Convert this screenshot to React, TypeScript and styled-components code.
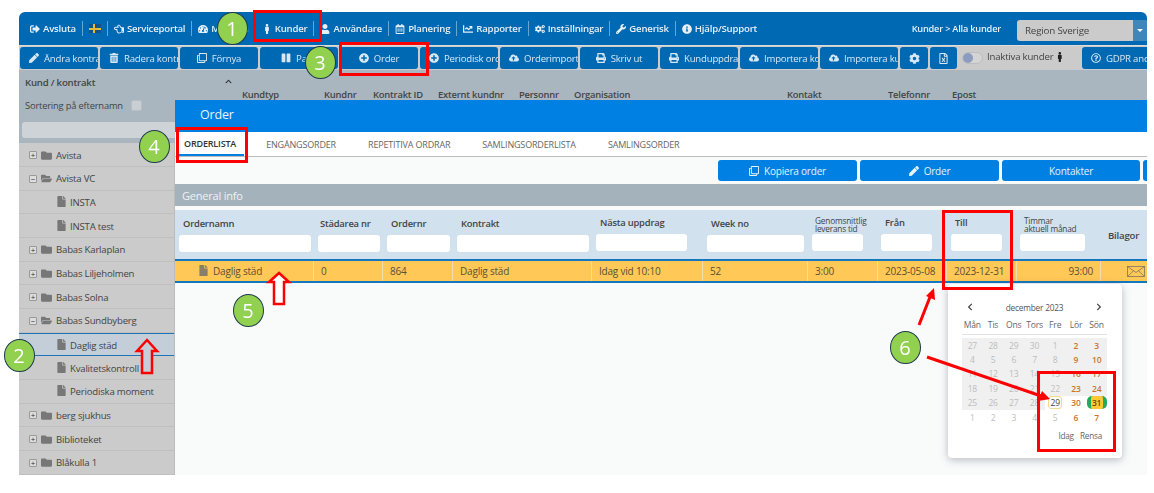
import React from 'react';
import styled, { createGlobalStyle } from 'styled-components';
import {
  FaChevronLeft,
  FaChevronRight,
  FaChevronUp,
  FaChartLine,
  FaCloudUploadAlt,
  FaCog,
  FaCogs,
  FaFile,
  FaFolder,
  FaFolderOpen,
  FaInfoCircle,
  FaMale,
  FaPause,
  FaPen,
  FaPlusCircle,
  FaPrint,
  FaRegCalendarAlt,
  FaRegClone,
  FaRegFileExcel,
  FaRegHandPointLeft,
  FaRegQuestionCircle,
  FaSignOutAlt,
  FaTachometerAlt,
  FaTrashAlt,
  FaUser,
  FaWrench,
} from 'react-icons/fa';

const GlobalStyle = createGlobalStyle`
  html, body {
    margin: 0;
    background: #fff;
    font-family: "Open Sans", "Noto Sans", sans-serif;
  }
  * {
    box-sizing: border-box;
  }
`;

const Page = styled.div`
  position: relative;
  width: 1154px;
  height: 493px;
  padding: 12px 7px 18px 19px;
  overflow: hidden;
`;

const Frame = styled.div`
  display: flex;
  flex-direction: column;
  width: 1128px;
  height: 463px;
  border-radius: 6px 6px 0 0;
  overflow: hidden;
  font-size: 10px;
  letter-spacing: -0.2px;
  filter: blur(0.3px);
`;

const NavBar = styled.div`
  display: flex;
  flex: none;
  align-items: center;
  height: 33px;
  padding-left: 5px;
  background: #0069b4;
  color: #e6f0f8;
`;

const NavItem = styled.div<{ $last?: boolean }>`
  display: flex;
  align-items: center;
  gap: 3px;
  height: 15px;
  padding: 0 6px;
  border-right: ${p => (p.$last ? 'none' : '1px solid #6aa6d2')};
  font-size: 9.6px;
  font-weight: 600;
  white-space: nowrap;
  svg {
    font-size: 10px;
  }
`;

const Flag = styled.span`
  display: block;
  width: 12px;
  height: 9px;
  background:
    linear-gradient(#e3b93a, #e3b93a) 0 50% / 100% 2px no-repeat,
    linear-gradient(#e3b93a, #e3b93a) 4px 0 / 2px 100% no-repeat,
    #14528c;
`;

const Breadcrumb = styled.div`
  margin-left: auto;
  font-size: 9.2px;
  font-weight: 600;
  white-space: nowrap;
`;

const RegionSelect = styled.div`
  display: flex;
  flex: none;
  align-items: center;
  width: 130px;
  height: 21px;
  margin: 3px 0 0 16px;
  border-radius: 3px 0 0 3px;
  background: #cbcbcb;
  color: #444;
  font-size: 9.8px;
  padding-left: 8px;
`;

const SelectCaret = styled.div`
  display: flex;
  align-items: center;
  justify-content: center;
  align-self: stretch;
  width: 14px;
  margin-left: auto;
  background: #3f86bb;
  &::before {
    content: '';
    border: 3px solid transparent;
    border-top-color: #fff;
    margin-top: 3px;
  }
`;

const ToolBar = styled.div`
  display: flex;
  flex: none;
  align-items: center;
  gap: 2px;
  height: 25px;
  padding-left: 1px;
  border-top: 1px solid #dcdcdc;
  background: #cbcbcb;
  overflow: hidden;
`;

const ToolButton = styled.div<{ $width?: number }>`
  display: flex;
  flex: none;
  align-items: center;
  justify-content: safe center;
  gap: 5px;
  width: ${p => p.$width ?? 78}px;
  height: 22px;
  padding: 0 9px;
  border-radius: 3px;
  background: #0069b4;
  color: #d8e8f4;
  font-size: 9.6px;
  white-space: nowrap;
  overflow: hidden;
  svg {
    flex: none;
    font-size: 10px;
  }
`;

const IconButton = styled(ToolButton)`
  padding: 0;
  svg {
    font-size: 11px;
  }
`;

const Toggle = styled.div`
  display: flex;
  flex: none;
  align-items: center;
  width: 21px;
  height: 12px;
  margin-left: 3px;
  border: 1px solid #bdbdbd;
  border-radius: 6px;
  background: #d4d4d4;
  &::before {
    content: '';
    width: 10px;
    height: 10px;
    border-radius: 50%;
    background: #8b9cc0;
  }
`;

const ToggleLabel = styled.div`
  display: flex;
  flex: none;
  align-items: center;
  gap: 2px;
  width: 78px;
  margin: -3px 15px 0 2px;
  color: #444;
  font-size: 9.6px;
  white-space: nowrap;
  svg {
    color: #222;
    font-size: 10px;
  }
`;

const Main = styled.div`
  display: flex;
  flex: 1;
  min-height: 0;
  background: #a9b6bf;
`;

const SideColumn = styled.div`
  display: flex;
  flex: none;
  flex-direction: column;
  width: 156px;
`;

const SideHead = styled.div`
  flex: none;
  height: 73.4px;
  padding: 6px 0 0 6px;
  color: #444;
`;

const SideTitle = styled.div`
  font-size: 9.6px;
  font-weight: 600;
  line-height: 14px;
`;

const SortRow = styled.div`
  display: flex;
  align-items: center;
  gap: 8px;
  height: 12px;
  margin-top: 9px;
  font-size: 9.4px;
`;

const SortCheck = styled.span`
  width: 11px;
  height: 11px;
  border: 1px solid #b7bfc5;
  border-radius: 2px;
  background: #c9cfd3;
`;

const SideSearch = styled.div`
  height: 16px;
  margin: 11px 0 0 -3px;
  border-radius: 3px 0 0 3px;
  background: #cdd3d7;
`;

const Tree = styled.div`
  flex: 1;
  border-right: 1px solid #bbb;
  background: #cbcbcb;
  overflow: hidden;
`;

const TreeRow = styled.div<{ $leaf?: boolean; $selected?: boolean }>`
  display: flex;
  align-items: center;
  height: 23.67px;
  padding: ${p => (p.$selected ? 3 : 1)}px 0 0 ${p => (p.$leaf ? 37 : 10)}px;
  border-bottom: 1px solid ${p => (p.$selected ? '#1f74b7' : '#bfbfbf')};
  border-top: ${p => (p.$selected ? '1px solid #1f74b7' : 'none')};
  background: ${p => (p.$selected ? '#c3ced8' : 'transparent')};
  color: #444;
  font-size: 9.6px;
  white-space: nowrap;
  svg {
    flex: none;
    color: #777;
  }
`;

const Expander = styled.span`
  display: flex;
  flex: none;
  align-items: center;
  justify-content: center;
  width: 8px;
  height: 8px;
  margin-right: 4px;
  border: 1px solid #999;
  border-radius: 1px;
  background: #ddd;
  color: #333;
  font-size: 8px;
  line-height: 1;
`;

const FolderIcon = styled.span`
  display: flex;
  margin-right: 4px;
  font-size: 11px;
`;

const FileIcon = styled.span`
  display: flex;
  margin: -2px 3px 0 0;
  font-size: 11px;
`;

const ListColumn = styled.div`
  display: flex;
  flex: 1;
  flex-direction: column;
  min-width: 0;
`;

const ListHead = styled.div`
  flex: none;
  height: 30px;
  padding-left: 67px;
  overflow: hidden;
  color: #444;
`;

const ChevronCell = styled.div`
  height: 17px;
  margin-left: -17px;
  padding-top: 8px;
  color: #333;
  font-size: 7px;
  line-height: 7px;
`;

const ListColumns = styled.div`
  display: grid;
  grid-template-columns: 82px 49px 65px 81px 55px 213px 101px 64px 60px;
  margin-top: 1px;
  font-size: 9.4px;
  font-weight: 600;
  line-height: 13px;
  white-space: nowrap;
`;

const Modal = styled.div`
  position: relative;
  display: flex;
  flex: 1;
  flex-direction: column;
  min-height: 0;
  background: #f9fbfb;
  overflow: hidden;
`;

const ModalTitle = styled.div`
  flex: none;
  height: 32px;
  padding: 7px 0 0 25px;
  background: #0080e2;
  color: #eaf4fc;
  font-size: 12.5px;
  line-height: 16px;
`;

const Tabs = styled.div`
  display: flex;
  flex: none;
  height: 25px;
  padding-left: 3px;
  border-bottom: 1px solid #bdbdbd;
  background: #fff;
`;

const Tab = styled.div<{ $active?: boolean }>`
  display: flex;
  align-items: center;
  height: 24px;
  margin-right: ${p => (p.$active ? 6 : 0)}px;
  padding: ${p => (p.$active ? '0 8px 0 6px' : '0 16px')};
  border-bottom: ${p => (p.$active ? '2px solid #0080e2' : 'none')};
  color: ${p => (p.$active ? '#333' : '#666')};
  font-size: 9px;
  font-weight: ${p => (p.$active ? 600 : 400)};
  letter-spacing: -0.17px;
  white-space: nowrap;
`;

const ActionRow = styled.div`
  display: flex;
  flex: none;
  gap: 3px;
  height: 27px;
  padding: 3px 0 0 543px;
`;

const ActionButton = styled.div<{ $width: number }>`
  display: flex;
  flex: none;
  align-items: center;
  justify-content: center;
  gap: 5px;
  width: ${p => p.$width}px;
  height: 21px;
  border-radius: 3px;
  background: #0080e2;
  color: #e6f2fc;
  font-size: 10px;
  svg {
    font-size: 10px;
  }
`;

const SectionBar = styled.div`
  flex: none;
  height: 22px;
  padding: 1px 0 0 7px;
  background: #a4b3bb;
  color: #eef2f4;
  font-size: 11px;
  line-height: 22px;
`;

const gridColumns = '139px 69px 70px 139px 111px 105px 70px 69px 70px 84px 46px';

const TableHead = styled.div`
  display: grid;
  flex: none;
  grid-template-columns: ${gridColumns};
  height: 49px;
  margin-top: 4px;
  background: #d2e1ee;
`;

const HeadCell = styled.div<{ $left?: number; $right?: number; $raised?: boolean }>`
  display: flex;
  flex-direction: column;
  height: 49px;
  padding: 0 ${p => p.$right ?? 3}px ${p => (p.$raised ? 8 : 7)}px ${p => p.$left ?? 4}px;
  color: #444;
`;

const HeadLabel = styled.div<{ $indent?: number }>`
  margin-top: auto;
  margin-bottom: 5px;
  padding-left: ${p => p.$indent ?? 4}px;
  font-size: 9.4px;
  font-weight: 600;
  line-height: 13px;
  white-space: nowrap;
`;

const SmallLabel = styled(HeadLabel)`
  margin-bottom: 1px;
  font-size: 8.3px;
  font-weight: 400;
  line-height: 8px;
`;

const FilterInput = styled.div`
  flex: none;
  height: 17px;
  border-radius: 3px;
  background: #fff;
`;

const BilagorCell = styled.div`
  align-self: center;
  padding-left: 7px;
  margin-top: 1px;
  color: #444;
  font-size: 9.6px;
  font-weight: 600;
`;

const TableRow = styled.div`
  display: grid;
  flex: none;
  grid-template-columns: ${gridColumns};
  height: 24px;
  border-top: 2px solid #1477bf;
  border-bottom: 2px solid #1477bf;
  background: #ffc857;
  color: #5b5135;
  font-size: 10px;
`;

const RowCell = styled.div<{ $end?: boolean }>`
  display: flex;
  align-items: center;
  justify-content: ${p => (p.$end ? 'flex-end' : 'flex-start')};
  padding: ${p => (p.$end ? '0 7px 0 0' : '0 0 0 7px')};
  border-right: 1px solid #f5dda8;
  white-space: nowrap;
`;

const NameCell = styled(RowCell)`
  padding-left: 23px;
  svg {
    margin: -2px 4px 0 0;
    color: #8a8069;
    font-size: 11px;
  }
`;

const MailCell = styled.div`
  display: flex;
  align-items: center;
  padding-left: 26px;
`;

const Picker = styled.div`
  position: absolute;
  top: 184px;
  left: 773px;
  width: 174px;
  height: 174px;
  padding: 0 15px 0 14px;
  border-radius: 4px;
  background: #fff;
  box-shadow: 0 2px 8px rgba(60, 70, 90, 0.35);
  color: #555;
`;

const PickerHead = styled.div`
  display: flex;
  align-items: center;
  justify-content: space-between;
  height: 16px;
  margin-top: 15px;
  padding: 0 4px;
  font-size: 8.3px;
  svg {
    color: #444;
    font-size: 8px;
  }
`;

const WeekDays = styled.div`
  display: grid;
  grid-template-columns: repeat(7, 1fr);
  height: 17px;
  margin-top: 3px;
  border-bottom: 1px solid #e2e2e2;
  color: #666;
  font-size: 8.6px;
  line-height: 15px;
  text-align: center;
`;

const Days = styled.div`
  display: grid;
  grid-template-columns: repeat(7, 1fr);
  grid-auto-rows: 14.4px;
  margin-top: 3px;
`;

const Day = styled.div<{ $shaded?: boolean; $weekend?: boolean }>`
  display: flex;
  align-items: center;
  justify-content: center;
  background: ${p => (p.$shaded ? '#f0f0f0' : 'transparent')};
  color: ${p => (p.$weekend ? '#c9762c' : '#bdbdbd')};
  font-size: 8.5px;
  font-weight: ${p => (p.$weekend ? 600 : 400)};
`;

const TodayMark = styled.span`
  display: flex;
  align-items: center;
  justify-content: center;
  width: 14px;
  height: 13px;
  border: 1px solid #f3d98f;
  border-radius: 3px;
  background: #fff;
  color: #444;
`;

const ChosenMark = styled.span`
  display: flex;
  align-items: center;
  justify-content: center;
  width: 20px;
  height: 13px;
  border-left: 4px solid #27a85f;
  border-right: 4px solid #27a85f;
  border-radius: 5px;
  background: #ffc837;
  color: #6a4b10;
  font-weight: 600;
`;

const PickerFoot = styled.div`
  display: flex;
  justify-content: flex-end;
  gap: 6px;
  margin-top: 6px;
  padding-right: 5px;
  color: #666;
  font-size: 8.2px;
`;

const RedBox = styled.div<{ $x: number; $y: number; $w: number; $h: number }>`
  position: absolute;
  top: ${p => p.$y}px;
  left: ${p => p.$x}px;
  width: ${p => p.$w}px;
  height: ${p => p.$h}px;
  border: 3px solid #f00;
`;

const Bubble = styled.div<{ $x: number; $y: number }>`
  position: absolute;
  top: ${p => p.$y - 16.5}px;
  left: ${p => p.$x - 15.5}px;
  display: flex;
  align-items: center;
  justify-content: center;
  width: 31px;
  height: 33px;
  border: 1px solid #1f3a4d;
  border-radius: 50%;
  background: #92d050;
  color: #fff;
  font-family: "Open Sans", sans-serif;
  font-size: 20px;
`;

const ArrowLayer = styled.svg`
  position: absolute;
  top: 0;
  left: 0;
  width: 1154px;
  height: 493px;
  pointer-events: none;
`;

const toolButtons = [
  { label: 'Ändra kontrakt', icon: <FaPen /> },
  { label: 'Radera kontrakt', icon: <FaTrashAlt /> },
  { label: 'Förnya', icon: <FaRegClone /> },
  { label: 'Paus', icon: <FaPause /> },
  { label: 'Order', icon: <FaPlusCircle /> },
  { label: 'Periodisk order', icon: <FaPlusCircle /> },
  { label: 'Orderimport', icon: <FaCloudUploadAlt /> },
  { label: 'Skriv ut', icon: <FaPrint /> },
  { label: 'Kunduppdrag', icon: <FaPrint /> },
  { label: 'Importera kontrakt', icon: <FaCloudUploadAlt /> },
  { label: 'Importera kunder', icon: <FaCloudUploadAlt /> },
];

const treeRows = [
  { label: 'Avista', kind: 'closed' },
  { label: 'Avista VC', kind: 'open' },
  { label: 'INSTA', kind: 'leaf' },
  { label: 'INSTA test', kind: 'leaf' },
  { label: 'Babas Karlaplan', kind: 'closed' },
  { label: 'Babas Liljeholmen', kind: 'closed' },
  { label: 'Babas Solna', kind: 'closed' },
  { label: 'Babas Sundbyberg', kind: 'open' },
  { label: 'Daglig städ', kind: 'leaf', selected: true },
  { label: 'Kvalitetskontroll', kind: 'leaf' },
  { label: 'Periodiska moment', kind: 'leaf' },
  { label: 'berg sjukhus', kind: 'closed' },
  { label: 'Biblioteket', kind: 'closed' },
  { label: 'Blåkulla 1', kind: 'closed' },
  { label: 'Blåkulla 2', kind: 'closed' },
];

const listColumns = ['Kundtyp', 'Kundnr', 'Kontrakt ID', 'Externt kundnr', 'Personnr', 'Organisation', 'Kontakt', 'Telefonnr', 'Epost'];

const weekDays = ['Mån', 'Tis', 'Ons', 'Tors', 'Fre', 'Lör', 'Sön'];

const calendarDays = [
  27, 28, 29, 30, 1, 2, 3,
  4, 5, 6, 7, 8, 9, 10,
  11, 12, 13, 14, 15, 16, 17,
  18, 19, 20, 21, 22, 23, 24,
  25, 26, 27, 28, 29, 30, 31,
  1, 2, 3, 4, 5, 6, 7,
];

const TODAY_INDEX = 32;
const CHOSEN_INDEX = 34;

const App: React.FC = () => {
  return (
    <Page>
      <GlobalStyle />
      <Frame>
        <NavBar>
          <NavItem><FaSignOutAlt />Avsluta</NavItem>
          <NavItem><Flag /></NavItem>
          <NavItem><FaRegHandPointLeft />Serviceportal</NavItem>
          <NavItem><FaTachometerAlt />Min sida</NavItem>
          <NavItem><FaMale />Kunder</NavItem>
          <NavItem><FaUser />Användare</NavItem>
          <NavItem><FaRegCalendarAlt />Planering</NavItem>
          <NavItem><FaChartLine />Rapporter</NavItem>
          <NavItem><FaCogs />Inställningar</NavItem>
          <NavItem><FaWrench />Generisk</NavItem>
          <NavItem $last><FaInfoCircle />Hjälp/Support</NavItem>
          <Breadcrumb>Kunder &gt; Alla kunder</Breadcrumb>
          <RegionSelect>
            Region Sverige
            <SelectCaret />
          </RegionSelect>
        </NavBar>
        <ToolBar>
          {toolButtons.map(button => (
            <ToolButton key={button.label}>
              {button.icon}
              {button.label}
            </ToolButton>
          ))}
          <IconButton $width={28}><FaCog /></IconButton>
          <IconButton $width={27}><FaRegFileExcel /></IconButton>
          <Toggle />
          <ToggleLabel>Inaktiva kunder<FaMale /></ToggleLabel>
          <ToolButton $width={80}><FaRegQuestionCircle />GDPR and privacy</ToolButton>
        </ToolBar>
        <Main>
          <SideColumn>
            <SideHead>
              <SideTitle>Kund / kontrakt</SideTitle>
              <SortRow>Sortering på efternamn<SortCheck /></SortRow>
              <SideSearch />
            </SideHead>
            <Tree>
              {treeRows.map(row => (
                <TreeRow key={row.label} $leaf={row.kind === 'leaf'} $selected={row.selected}>
                  {row.kind === 'leaf' ? (
                    <FileIcon><FaFile /></FileIcon>
                  ) : (
                    <>
                      <Expander>{row.kind === 'open' ? '−' : '+'}</Expander>
                      <FolderIcon>{row.kind === 'open' ? <FaFolderOpen /> : <FaFolder />}</FolderIcon>
                    </>
                  )}
                  {row.label}
                </TreeRow>
              ))}
            </Tree>
          </SideColumn>
          <ListColumn>
            <ListHead>
              <ChevronCell><FaChevronUp /></ChevronCell>
              <ListColumns>
                {listColumns.map(column => (
                  <div key={column}>{column}</div>
                ))}
              </ListColumns>
            </ListHead>
            <Modal>
              <ModalTitle>Order</ModalTitle>
              <Tabs>
                <Tab $active>ORDERLISTA</Tab>
                <Tab>ENGÅNGSORDER</Tab>
                <Tab>REPETITIVA ORDRAR</Tab>
                <Tab>SAMLINGSORDERLISTA</Tab>
                <Tab>SAMLINGSORDER</Tab>
              </Tabs>
              <ActionRow>
                <ActionButton $width={139}><FaRegClone />Kopiera order</ActionButton>
                <ActionButton $width={139}><FaPen />Order</ActionButton>
                <ActionButton $width={138}>Kontakter</ActionButton>
                <ActionButton $width={138}>Bilagor</ActionButton>
              </ActionRow>
              <SectionBar>General info</SectionBar>
              <TableHead>
                <HeadCell><HeadLabel>Ordernamn</HeadLabel><FilterInput /></HeadCell>
                <HeadCell><HeadLabel $indent={2}>Städarea nr</HeadLabel><FilterInput /></HeadCell>
                <HeadCell><HeadLabel>Ordernr</HeadLabel><FilterInput /></HeadCell>
                <HeadCell><HeadLabel>Kontrakt</HeadLabel><FilterInput /></HeadCell>
                <HeadCell $right={16} $raised><HeadLabel>Nästa uppdrag</HeadLabel><FilterInput /></HeadCell>
                <HeadCell $right={4}><HeadLabel>Week no</HeadLabel><FilterInput /></HeadCell>
                <HeadCell $right={15} $raised><SmallLabel $indent={3}>Genomsnittlig<br />leverans tid</SmallLabel><FilterInput /></HeadCell>
                <HeadCell $left={3} $right={15} $raised><HeadLabel $indent={4}>Från</HeadLabel><FilterInput /></HeadCell>
                <HeadCell $right={15} $raised><HeadLabel>Till</HeadLabel><FilterInput /></HeadCell>
                <HeadCell $left={3} $right={16} $raised><SmallLabel $indent={4}>Timmar<br />aktuell månad</SmallLabel><FilterInput /></HeadCell>
                <BilagorCell>Bilagor</BilagorCell>
              </TableHead>
              <TableRow>
                <NameCell><FaFile />Daglig städ</NameCell>
                <RowCell>0</RowCell>
                <RowCell>864</RowCell>
                <RowCell>Daglig städ</RowCell>
                <RowCell>Idag vid 10:10</RowCell>
                <RowCell>52</RowCell>
                <RowCell>3:00</RowCell>
                <RowCell>2023-05-08</RowCell>
                <RowCell>2023-12-31</RowCell>
                <RowCell $end>93:00</RowCell>
                <MailCell>
                  <svg width="18" height="11" viewBox="0 0 18 11" fill="none" stroke="#7d7662" strokeWidth="0.8">
                    <rect x="0.5" y="0.5" width="17" height="10" />
                    <path d="M0.5 0.5 9 6.5 17.5 0.5M0.5 10.5 6.5 4.8M17.5 10.5 11.5 4.8" />
                  </svg>
                </MailCell>
              </TableRow>
              <Picker>
                <PickerHead>
                  <FaChevronLeft />
                  december 2023
                  <FaChevronRight />
                </PickerHead>
                <WeekDays>
                  {weekDays.map(day => (
                    <div key={day}>{day}</div>
                  ))}
                </WeekDays>
                <Days>
                  {calendarDays.map((day, i) => (
                    <Day key={i} $shaded={i < TODAY_INDEX} $weekend={i % 7 >= 5}>
                      {i === TODAY_INDEX ? (
                        <TodayMark>{day}</TodayMark>
                      ) : i === CHOSEN_INDEX ? (
                        <ChosenMark>{day}</ChosenMark>
                      ) : (
                        day
                      )}
                    </Day>
                  ))}
                </Days>
                <PickerFoot>
                  <span>Idag</span>
                  <span>Rensa</span>
                </PickerFoot>
              </Picker>
            </Modal>
          </ListColumn>
        </Main>
      </Frame>

      <RedBox $x={253} $y={10} $w={69} $h={32} />
      <RedBox $x={339} $y={42} $w={90} $h={34} />
      <RedBox $x={176} $y={127} $w={72} $h={36} />
      <RedBox $x={942} $y={210} $w={71} $h={80} />
      <RedBox $x={1037} $y={371} $w={79} $h={81} />

      <ArrowLayer viewBox="0 0 1154 493">
        <path d="M279 273 289 282 284 282 284 304 274 304 274 282 269 282Z" fill="#fff" stroke="#f00" strokeWidth="2.5" />
        <path d="M147 340 157 351 152 351 152 373 142 373 142 351 137 351Z" fill="#c3ced8" stroke="#f00" strokeWidth="2.5" />
        <path d="M919 325 930 297" stroke="#f00" strokeWidth="3" fill="none" />
        <path d="M934 288 926 296 935 300Z" fill="#f00" />
        <path d="M927 357 1041 396" stroke="#f00" strokeWidth="3" fill="none" />
        <path d="M1050 399 1038 401 1042 391Z" fill="#f00" />
      </ArrowLayer>

      <Bubble $x={232} $y={28}>1</Bubble>
      <Bubble $x={19} $y={355}>2</Bubble>
      <Bubble $x={320} $y={62}>3</Bubble>
      <Bubble $x={154} $y={146}>4</Bubble>
      <Bubble $x={248} $y={310}>5</Bubble>
      <Bubble $x={905} $y={347}>6</Bubble>
    </Page>
  );
};

export default App;
